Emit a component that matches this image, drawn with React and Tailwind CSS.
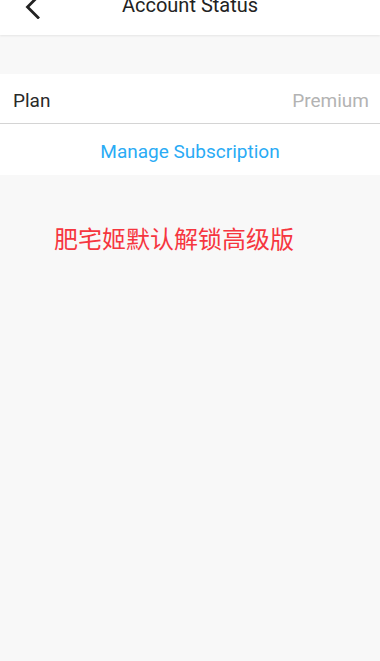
import React from 'react';

function BackIcon() {
  return (
    <svg width="20" height="24" viewBox="0 0 20 24" fill="none">
      <path d="M16 1.5 L5.5 12 L16 22.5" stroke="#222" strokeWidth="2.8" strokeLinecap="square" />
    </svg>
  );
}

export default function App() {
  return (
    <div className="min-h-[661px] bg-[#f8f8f8] overflow-hidden" style={{ fontFamily: 'Roboto, "Noto Sans CJK SC", sans-serif' }}>
      <header className="relative -mt-[22px] h-[57px] bg-white flex items-center justify-center shadow-[0_1px_2px_rgba(0,0,0,0.08)]">
        <div className="absolute left-[22px] top-[17px]">
          <BackIcon />
        </div>
        <h1 className="text-[20px] text-[#222] -mt-[4px]">Account Status</h1>
      </header>

      <div className="h-[39px]" />

      <div className="bg-white">
        <div className="h-[50px] flex items-center justify-between pl-[13px] pr-[11px] pt-[5px] border-b border-[#d4d4d4]">
          <span className="text-[19px] text-[#2a2a2a]">Plan</span>
          <span className="text-[19px] text-[#b3b3b3]">Premium</span>
        </div>
        <div className="h-[51px] flex items-center justify-center pt-[5px]">
          <button className="text-[19px] text-[#2aabf5]">Manage Subscription</button>
        </div>
      </div>

      <p className="mt-[47px] pl-[54px] text-[24px] text-[#f6363f]">肥宅姬默认解锁高级版</p>
    </div>
  );
}
